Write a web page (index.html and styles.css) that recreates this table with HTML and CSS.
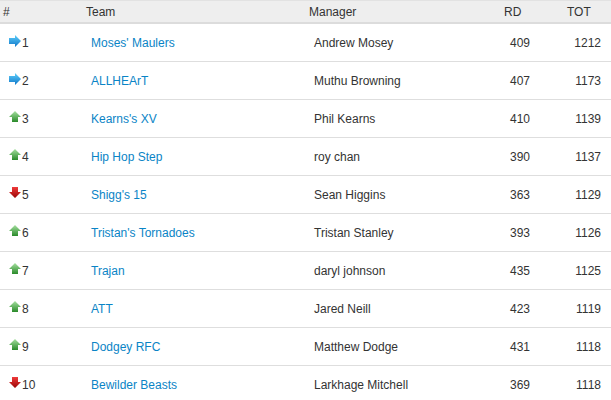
FILE: index.html
```html
<!DOCTYPE html>
<html>
<head>
<meta charset="utf-8">
<link rel="stylesheet" href="styles.css">
</head>
<body>
<svg width="0" height="0" class="defs">
  <defs>
    <linearGradient id="gb" x1="0" y1="0" x2="0" y2="1"><stop offset="0" stop-color="#5fd0fb"/><stop offset="1" stop-color="#0f76c8"/></linearGradient>
    <linearGradient id="gg" x1="0" y1="0" x2="0" y2="1"><stop offset="0" stop-color="#a6e0a0"/><stop offset="1" stop-color="#2a8a2a"/></linearGradient>
    <linearGradient id="gr" x1="0" y1="0" x2="0" y2="1"><stop offset="0" stop-color="#f03a3a"/><stop offset="1" stop-color="#9a0606"/></linearGradient>
    <symbol id="same" viewBox="0 0 12 12"><path d="M0 3h6V0l6 6-6 6V9H0z" fill="url(#gb)"/></symbol>
    <symbol id="up" viewBox="0 0 12 12"><path d="M6 0l6 6H9v5H3V6H0z" fill="url(#gg)"/></symbol>
    <symbol id="down" viewBox="0 0 12 12"><path d="M3 0h6v5h3l-6 6-6-6h3z" fill="url(#gr)"/></symbol>
  </defs>
</svg>
<div class="table">
  <div class="row head">
    <div class="c">#</div><div class="c">Team</div><div class="c">Manager</div><div class="c">RD</div><div class="c">TOT</div>
  </div>
  <div class="row"><div class="c pos"><svg class="ic"><use href="#same"/></svg>1</div><div class="c team"><a href="#">Moses' Maulers</a></div><div class="c mgr">Andrew Mosey</div><div class="c rd">409</div><div class="c tot">1212</div></div>
  <div class="row"><div class="c pos"><svg class="ic"><use href="#same"/></svg>2</div><div class="c team"><a href="#">ALLHEArT</a></div><div class="c mgr">Muthu Browning</div><div class="c rd">407</div><div class="c tot">1173</div></div>
  <div class="row"><div class="c pos"><svg class="ic"><use href="#up"/></svg>3</div><div class="c team"><a href="#">Kearns's XV</a></div><div class="c mgr">Phil Kearns</div><div class="c rd">410</div><div class="c tot">1139</div></div>
  <div class="row"><div class="c pos"><svg class="ic"><use href="#up"/></svg>4</div><div class="c team"><a href="#">Hip Hop Step</a></div><div class="c mgr">roy chan</div><div class="c rd">390</div><div class="c tot">1137</div></div>
  <div class="row"><div class="c pos"><svg class="ic"><use href="#down"/></svg>5</div><div class="c team"><a href="#">Shigg's 15</a></div><div class="c mgr">Sean Higgins</div><div class="c rd">363</div><div class="c tot">1129</div></div>
  <div class="row"><div class="c pos"><svg class="ic"><use href="#up"/></svg>6</div><div class="c team"><a href="#">Tristan's Tornadoes</a></div><div class="c mgr">Tristan Stanley</div><div class="c rd">393</div><div class="c tot">1126</div></div>
  <div class="row"><div class="c pos"><svg class="ic"><use href="#up"/></svg>7</div><div class="c team"><a href="#">Trajan</a></div><div class="c mgr">daryl johnson</div><div class="c rd">435</div><div class="c tot">1125</div></div>
  <div class="row"><div class="c pos"><svg class="ic"><use href="#up"/></svg>8</div><div class="c team"><a href="#">ATT</a></div><div class="c mgr">Jared Neill</div><div class="c rd">423</div><div class="c tot">1119</div></div>
  <div class="row"><div class="c pos"><svg class="ic"><use href="#up"/></svg>9</div><div class="c team"><a href="#">Dodgey RFC</a></div><div class="c mgr">Matthew Dodge</div><div class="c rd">431</div><div class="c tot">1118</div></div>
  <div class="row"><div class="c pos"><svg class="ic"><use href="#down"/></svg>10</div><div class="c team"><a href="#">Bewilder Beasts</a></div><div class="c mgr">Larkhage Mitchell</div><div class="c rd">369</div><div class="c tot">1118</div></div>
</div>
</body>
</html>
```
FILE: styles.css
```css
html, body {
  margin: 0;
  padding: 0;
  background: #fff;
}
body {
  font-family: "Liberation Sans", Arial, sans-serif;
  font-size: 12px;
  color: #333;
}
.defs {
  position: absolute;
  width: 0;
  height: 0;
}
.table {
  width: 611px;
}
.row {
  display: grid;
  grid-template-columns: 83px 223px 195px 63px 47px;
  height: 37px;
  border-bottom: 1px solid #dedede;
  align-items: center;
}
.row.head {
  height: 21px;
  background: #eeeeee;
  border-top: 1px solid #e2e2e2;
  border-bottom: 2px solid #dcdcdc;
  color: #333;
}
.head .c {
  padding-left: 3px;
  padding-top: 1px;
}
.c {
  white-space: nowrap;
  padding-top: 1px;
}
.pos {
  display: flex;
  align-items: center;
  padding-left: 9px;
}
.ic {
  width: 12px;
  height: 12px;
  margin-right: 1px;
  margin-top: -4px;
}
.team, .mgr {
  padding-left: 8px;
}
.team a {
  color: #0a84c6;
  text-decoration: none;
}
.rd {
  text-align: right;
  padding-right: 34px;
}
.tot {
  text-align: right;
  padding-right: 10px;
}
```
